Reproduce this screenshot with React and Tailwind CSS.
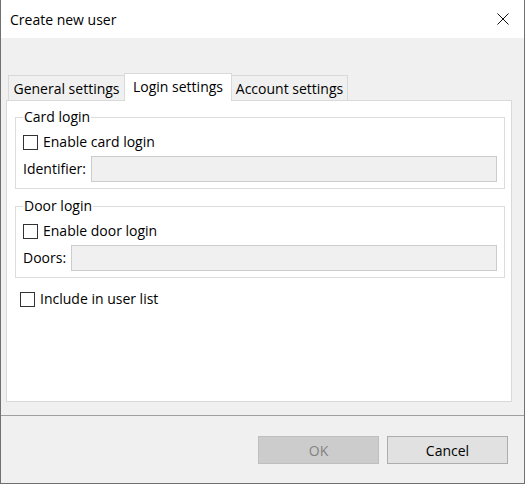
import React from 'react';

const Checkbox = ({ label, className = '' }) => (
    <label className={`flex items-center h-[20px] ${className}`}>
        <span className="w-[15px] h-[15px] border border-[#333333] bg-white shrink-0" />
        <span className="ml-[5px] leading-[20px]">{label}</span>
    </label>
);

const Field = ({ label }) => (
    <div className="flex items-center mt-[4px]">
        <span className="leading-[20px]">{label}</span>
        <div className="ml-[5px] flex-1 h-[26px] bg-[#f0f0f0] border border-[#cccccc]" />
    </div>
);

const Group = ({ title, check, field, className = '' }) => (
    <fieldset className={`w-[490px] border border-[#dcdcdc] px-[7px] pb-[6px] ${className}`}>
        <legend className="px-[1px] leading-[20px]">{title}</legend>
        <Checkbox label={check} className="mt-[5px]" />
        <Field label={field} />
    </fieldset>
);

const tabs = ['General settings', 'Login settings', 'Account settings'];

export default function App() {
    return (
        <div className="w-[525px] h-[484px] flex flex-col bg-[#f0f0f0] border-x border-b border-[#707070] text-[14px] text-black font-['Open_Sans',sans-serif]">
            {/* Title bar */}
            <div className="h-[38px] bg-white flex items-center pl-[9px] shrink-0">
                <span>Create new user</span>
                <svg className="ml-auto mr-[15px]" width="12" height="12" viewBox="0 0 12 12">
                    <path d="M0.5 0.5 L11.5 11.5 M11.5 0.5 L0.5 11.5" stroke="#111" strokeWidth="1" />
                </svg>
            </div>

            {/* Body */}
            <div className="flex-1 pl-[5px] pt-[35px] flex flex-col">
                <div className="flex items-end h-[27px] pl-[2px]">
                    {tabs.map((t, i) => {
                        const active = i === 1;
                        return (
                            <div
                                key={t}
                                className={
                                    active
                                        ? 'relative z-10 -ml-px -mb-px h-[28px] w-[108px] bg-white border-x border-t border-[#d9d9d9] flex items-center justify-center pb-[3px] whitespace-nowrap'
                                        : `h-[25px] w-[117px] bg-[#f0f0f0] border-x border-t border-[#d9d9d9] flex items-center justify-center whitespace-nowrap ${i > 0 ? '-ml-px' : ''}`
                                }
                            >
                                {t}
                            </div>
                        );
                    })}
                </div>
                <div className="w-[506px] h-[302px] bg-white border border-[#d9d9d9] px-[8px] pt-[6px]">
                    <Group title="Card login" check="Enable card login" field="Identifier:" />
                    <Group title="Door login" check="Enable door login" field="Doors:" className="mt-[7px]" />
                    <Checkbox label="Include in user list" className="mt-[11px] ml-[5px]" />
                </div>
            </div>

            <div className="h-px bg-[#a0a0a0] shrink-0" />

            {/* Footer */}
            <div className="h-[67px] shrink-0 flex justify-end items-start pt-[20px] pr-[16px] gap-[8px]">
                <button className="w-[121px] h-[28px] bg-[#cccccc] border border-[#bfbfbf] text-[#838383]">OK</button>
                <button className="w-[121px] h-[28px] bg-[#e1e1e1] border border-[#adadad]">Cancel</button>
            </div>
        </div>
    );
}
